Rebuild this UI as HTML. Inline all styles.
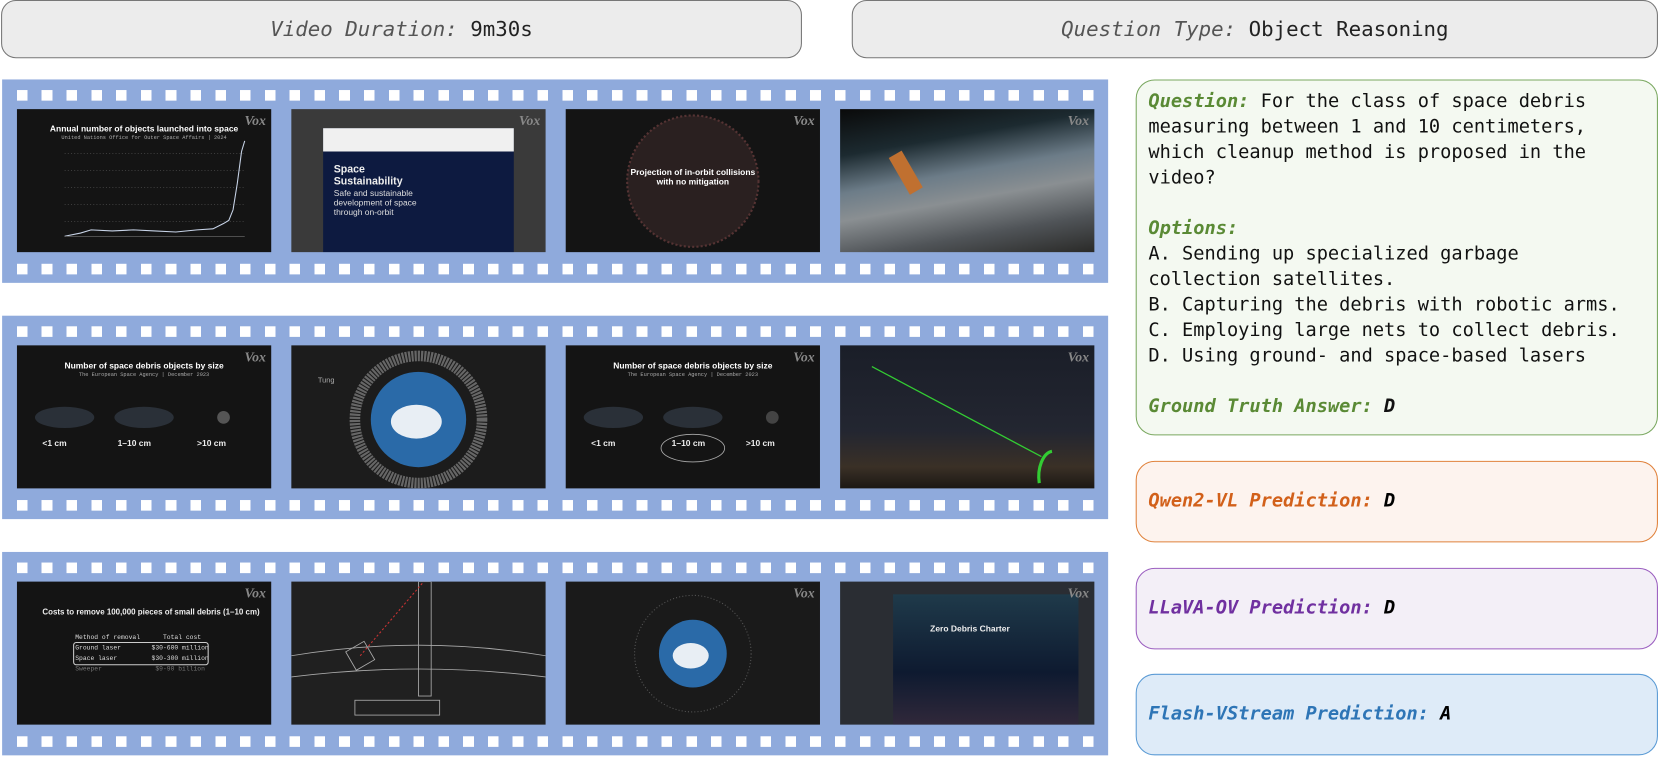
<!DOCTYPE html>
<html><head><meta charset="utf-8"><style>
*{margin:0;padding:0;box-sizing:border-box}
body{width:1661px;height:757px;background:#fff;position:relative;overflow:hidden;font-family:"DejaVu Sans Mono","Liberation Mono",monospace}
#w{position:absolute;left:0;top:0;width:1568px;height:715px;transform:scale(1.0594);transform-origin:0 0}
.hdr{position:absolute;top:0;height:55px;background:#ececec;border:1px solid #777;border-radius:14px;font-size:19.6px;color:#222;display:flex;align-items:center;justify-content:center}
.hdr i{color:#555}
.strip{position:absolute;left:2px;width:1044px;height:192px;background:#8faadc}
.holes{position:absolute;left:14px;right:4px;height:10px;background:repeating-linear-gradient(90deg,#fff 0 10px,transparent 10px 23.4px)}
.fr{position:absolute;top:28px;width:240px;height:135px;background:#141414;overflow:hidden;color:#eee;font-family:"Liberation Sans",sans-serif}
.vox{position:absolute;right:5px;top:3px;font-family:"Liberation Serif",serif;font-style:italic;font-weight:bold;font-size:13px;color:#888}
.t{position:absolute;font-weight:bold;font-size:8px;color:#fff;left:0;right:0;text-align:center}
.s{position:absolute;font-family:"Liberation Mono",monospace;font-size:5px;color:#aaa;left:0;right:0;text-align:center}
.box{position:absolute;left:1072px;width:493px;border-radius:18px;border:1px solid;font-size:17.6px;line-height:24px;padding-left:11px;padding-right:30px}
.box b{font-style:italic}
</style></head><body><div id="w">
<div class="hdr" style="left:1px;width:756px"><span><i>Video Duration:</i> 9m30s</span></div>
<div class="hdr" style="left:804px;width:761px"><span><i>Question Type:</i> Object Reasoning</span></div>

<div class="strip" style="top:75px">
<div class="holes" style="top:10px"></div><div class="holes" style="top:174px"></div>
<div class="fr" style="left:14px"><div class="vox">Vox</div><div class="t" style="top:14px">Annual number of objects launched into space</div><div class="s" style="top:24px">United Nations Office for Outer Space Affairs | 2024</div>
<svg width="240" height="135" style="position:absolute;left:0;top:0"><g stroke="#555" stroke-dasharray="1 2" stroke-width=".6"><line x1="45" y1="42" x2="215" y2="42"/><line x1="45" y1="58" x2="215" y2="58"/><line x1="45" y1="74" x2="215" y2="74"/><line x1="45" y1="90" x2="215" y2="90"/><line x1="45" y1="106" x2="215" y2="106"/></g><polyline fill="none" stroke="#c8d4e8" stroke-width="1" points="45,120 60,117 70,114 90,115 110,114 130,115 150,116 170,114 185,113 195,108 200,105 204,95 208,70 212,40 215,30"/><line x1="45" y1="120" x2="215" y2="120" stroke="#888" stroke-width=".5"/></svg></div>
<div class="fr" style="left:273px;background:#3a3a3a"><div style="position:absolute;left:30px;top:18px;width:180px;height:117px;background:#0d1a40"></div><div style="position:absolute;left:30px;top:18px;width:180px;height:22px;background:#f0f0f0"></div><div style="position:absolute;left:40px;top:52px;font-weight:bold;font-size:10px;line-height:11px">Space<br>Sustainability</div><div style="position:absolute;left:40px;top:75px;font-size:8px;line-height:9px;color:#ddd">Safe and sustainable<br>development of space<br>through on-orbit</div><div class="vox">Vox</div></div>
<div class="fr" style="left:532px"><svg width="240" height="135" style="position:absolute"><circle cx="120" cy="68" r="62" fill="#2a2020" stroke="#553333" stroke-width="2" stroke-dasharray="2 2"/></svg><div class="t" style="top:55px;font-size:8px">Projection of in-orbit collisions<br>with no mitigation</div><div class="vox">Vox</div></div>
<div class="fr" style="left:791px;background:linear-gradient(170deg,#0a0a0a 0%,#1c2a30 25%,#6c7c88 45%,#8a8f92 60%,#505458 80%,#2a2a28 100%)"><div style="position:absolute;left:55px;top:40px;width:14px;height:40px;background:#c07030;transform:rotate(-30deg)"></div><div class="vox">Vox</div></div>
</div>

<div class="strip" style="top:298px">
<div class="holes" style="top:10px"></div><div class="holes" style="top:174px"></div>
<div class="fr" style="left:14px"><div class="vox">Vox</div><div class="t" style="top:15px">Number of space debris objects by size</div><div class="s" style="top:25px">The European Space Agency | December 2023</div>
<svg width="240" height="135" style="position:absolute"><ellipse cx="45" cy="68" rx="28" ry="10" fill="#2a3038"/><ellipse cx="120" cy="68" rx="28" ry="10" fill="#2a3038"/><circle cx="195" cy="68" r="6" fill="#555"/></svg>
<div style="position:absolute;left:24px;top:88px;font-size:8px;font-weight:bold">&lt;1 cm</div><div style="position:absolute;left:95px;top:88px;font-size:8px;font-weight:bold">1–10 cm</div><div style="position:absolute;left:170px;top:88px;font-size:8px;font-weight:bold">&gt;10 cm</div></div>
<div class="fr" style="left:273px;background:#1c1c1c"><svg width="240" height="135" style="position:absolute"><circle cx="120" cy="70" r="60" fill="none" stroke="#666" stroke-width="10" stroke-dasharray="2 1"/><circle cx="120" cy="70" r="45" fill="#2a6aa8"/><ellipse cx="118" cy="72" rx="24" ry="16" fill="#e8eef4"/></svg><div style="position:absolute;left:25px;top:30px;font-size:7px;color:#aaa">Tung</div></div>
<div class="fr" style="left:532px"><div class="vox">Vox</div><div class="t" style="top:15px">Number of space debris objects by size</div><div class="s" style="top:25px">The European Space Agency | December 2023</div>
<svg width="240" height="135" style="position:absolute"><ellipse cx="45" cy="68" rx="28" ry="10" fill="#2a3038"/><ellipse cx="120" cy="68" rx="28" ry="10" fill="#2a3038"/><circle cx="195" cy="68" r="6" fill="#444"/><ellipse cx="120" cy="97" rx="30" ry="13" fill="none" stroke="#aaa" stroke-width=".8"/></svg>
<div style="position:absolute;left:24px;top:88px;font-size:8px;font-weight:bold">&lt;1 cm</div><div style="position:absolute;left:100px;top:88px;font-size:8px;font-weight:bold">1–10 cm</div><div style="position:absolute;left:170px;top:88px;font-size:8px;font-weight:bold">&gt;10 cm</div></div>
<div class="fr" style="left:791px;background:linear-gradient(180deg,#1a1e28 0%,#232631 60%,#3a3026 85%,#1c1814 100%)"><svg width="240" height="135" style="position:absolute"><line x1="30" y1="20" x2="190" y2="105" stroke="#3c3" stroke-width="1.2"/><path d="M188 130 A14 24 0 0 1 200 100" stroke="#3c3" stroke-width="3" fill="none"/></svg><div class="vox">Vox</div></div>
</div>

<div class="strip" style="top:521px">
<div class="holes" style="top:10px"></div><div class="holes" style="top:174px"></div>
<div class="fr" style="left:14px"><div class="vox">Vox</div><div style="position:absolute;left:24px;top:24px;font-size:7.5px;font-weight:bold">Costs to remove 100,000 pieces of small debris (1–10 cm)</div>
<div style="position:absolute;left:55px;top:48px;font-family:'Liberation Mono',monospace;font-size:6px;line-height:10px;color:#ddd;white-space:pre">Method of removal      Total cost
Ground laser        $30-600 million
Space laser         $30-300 million
<span style="color:#777">Sweeper              $9-90 billion</span></div><div style="position:absolute;left:53px;top:57px;width:128px;height:22px;border:1px solid #ccc;border-radius:3px"></div></div>
<div class="fr" style="left:273px;background:#202020"><svg width="240" height="135" style="position:absolute"><g fill="none" stroke="#aaa" stroke-width=".8"><path d="M0 70 Q120 50 240 70"/><path d="M0 90 Q120 75 240 90"/><rect x="120" y="0" width="12" height="108"/><rect x="60" y="112" width="80" height="14"/><rect x="55" y="60" width="20" height="20" transform="rotate(-30 65 70)"/></g><line x1="65" y1="70" x2="125" y2="0" stroke="#c33" stroke-dasharray="2 2"/></svg></div>
<div class="fr" style="left:532px;background:#1a1a1a"><svg width="240" height="135" style="position:absolute"><circle cx="120" cy="68" r="55" fill="none" stroke="#555" stroke-dasharray="1 2"/><circle cx="120" cy="68" r="32" fill="#2a6aa8"/><ellipse cx="118" cy="70" rx="17" ry="12" fill="#e8eef4"/></svg><div class="vox">Vox</div></div>
<div class="fr" style="left:791px;background:#2a2d33"><div style="position:absolute;left:50px;top:12px;width:175px;height:123px;background:linear-gradient(180deg,#1f3a4a,#0e1a30 60%,#30283a)"></div><div style="position:absolute;left:85px;top:40px;font-size:8px;font-weight:bold">Zero Debris Charter</div><div class="vox">Vox</div></div>
</div>

<div class="box" style="top:75px;height:336px;background:#f4f9f1;border-color:#7aa860;padding-top:8px;color:#111"><b style="color:#5a8a35">Question:</b> For the class of space debris measuring between 1 and 10 centimeters, which cleanup method is proposed in the video?<br><br><b style="color:#5a8a35">Options:</b><br>A. Sending up specialized garbage collection satellites.<br><span style="white-space:nowrap">B. Capturing the debris with robotic arms.</span><br><span style="white-space:nowrap">C. Employing large nets to collect debris.</span><br>D. Using ground- and space-based lasers<br><br><b style="color:#5a8a35">Ground Truth Answer:</b> <b>D</b></div>
<div class="box" style="top:435px;height:77px;background:#fdf3ee;border-color:#e0823c;line-height:75px"><b style="color:#d2601a">Qwen2-VL Prediction:</b> <b>D</b></div>
<div class="box" style="top:536px;height:77px;background:#f3eff7;border-color:#9b5fc0;line-height:75px"><b style="color:#7030a0">LLaVA-OV Prediction:</b> <b>D</b></div>
<div class="box" style="top:636px;height:77px;background:#deebf8;border-color:#5b9bd5;line-height:75px"><b style="color:#2e75b6">Flash-VStream Prediction:</b> <b>A</b></div>
</div></body></html>
